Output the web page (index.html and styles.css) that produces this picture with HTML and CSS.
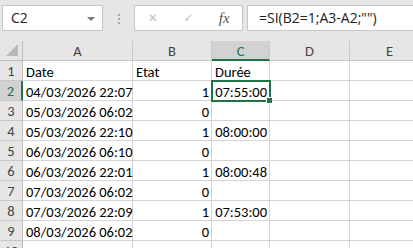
FILE: index.html
```html
<!DOCTYPE html>
<html lang="fr">
<head>
  <meta charset="UTF-8">
  <title>Classeur</title>
  <link rel="stylesheet" href="styles.css">
</head>
<body>
  <!-- barre de formule -->
  <div class="toolbar">
    <div class="namebox">C2<span class="drop"></span></div>
    <div class="grip"><i></i><i></i><i></i></div>
    <div class="fxbuttons">
      <span class="btn cancel">✕</span>
      <span class="btn ok">✓</span>
      <span class="btn fx">fx</span>
    </div>
    <div class="formula">=SI(B2=1;A3-A2;"")</div>
  </div>

  <!-- feuille -->
  <div class="sheet">
    <div class="hd corner"><span class="tri"></span></div>
    <div class="hd col">A</div>
    <div class="hd col">B</div>
    <div class="hd col sel">C</div>
    <div class="hd col">D</div>
    <div class="hd col">E</div>

    <div class="hd row">1</div>
    <div class="cell">Date</div><div class="cell">Etat</div><div class="cell">Durée</div><div class="cell"></div><div class="cell"></div>

    <div class="hd row sel">2</div>
    <div class="cell num">04/03/2026 22:07</div><div class="cell num">1</div><div class="cell num active">07:55:00<span class="handle"></span></div><div class="cell"></div><div class="cell"></div>

    <div class="hd row">3</div>
    <div class="cell num">05/03/2026 06:02</div><div class="cell num">0</div><div class="cell"></div><div class="cell"></div><div class="cell"></div>

    <div class="hd row">4</div>
    <div class="cell num">05/03/2026 22:10</div><div class="cell num">1</div><div class="cell num">08:00:00</div><div class="cell"></div><div class="cell"></div>

    <div class="hd row">5</div>
    <div class="cell num">06/03/2026 06:10</div><div class="cell num">0</div><div class="cell"></div><div class="cell"></div><div class="cell"></div>

    <div class="hd row">6</div>
    <div class="cell num">06/03/2026 22:01</div><div class="cell num">1</div><div class="cell num">08:00:48</div><div class="cell"></div><div class="cell"></div>

    <div class="hd row">7</div>
    <div class="cell num">07/03/2026 06:02</div><div class="cell num">0</div><div class="cell"></div><div class="cell"></div><div class="cell"></div>

    <div class="hd row">8</div>
    <div class="cell num">07/03/2026 22:09</div><div class="cell num">1</div><div class="cell num">07:53:00</div><div class="cell"></div><div class="cell"></div>

    <div class="hd row">9</div>
    <div class="cell num">08/03/2026 06:02</div><div class="cell num">0</div><div class="cell"></div><div class="cell"></div><div class="cell"></div>

    <div class="hd row">10</div>
    <div class="cell"></div><div class="cell"></div><div class="cell"></div><div class="cell"></div><div class="cell"></div>
  </div>
</body>
</html>
```

FILE: styles.css
```css
body {
  margin: 0;
  padding: 0;
  background: #fff;
  font-family: "Carlito", "Lato", sans-serif;
  overflow: hidden;
}
.toolbar {
  height: 41px;
  box-sizing: border-box;
  background: #e6e6e6;
  display: flex;
  align-items: flex-start;
  padding-top: 5px;
}
.namebox {
  margin-left: 2px;
  width: 101px;
  height: 26px;
  box-sizing: border-box;
  background: #fff;
  border: 1px solid #c6c6c6;
  position: relative;
  font-family: "Open Sans", sans-serif;
  font-size: 14px;
  line-height: 24px;
  padding-left: 8px;
  color: #222;
}
.drop {
  position: absolute;
  right: 7px;
  top: 11px;
  border-left: 4px solid transparent;
  border-right: 4px solid transparent;
  border-top: 4px solid #777;
}
.grip {
  width: 31px;
  display: flex;
  flex-direction: column;
  align-items: center;
  gap: 2px;
  padding-top: 9px;
}
.grip i {
  display: block;
  width: 2px;
  height: 2px;
  background: #a8a8a8;
}
.fxbuttons {
  width: 109px;
  height: 26px;
  box-sizing: border-box;
  background: #fff;
  border: 1px solid #c6c6c6;
  display: flex;
  align-items: center;
}
.btn {
  width: 36px;
  text-align: center;
  color: #c3c3c3;
  font-family: "DejaVu Sans", sans-serif;
  font-size: 12px;
}
.btn.fx {
  color: #555;
  font-family: "Liberation Serif", serif;
  font-style: italic;
  font-size: 15px;
}
.formula {
  margin-left: 4px;
  flex: 1;
  height: 26px;
  box-sizing: border-box;
  background: #fff;
  border: 1px solid #c6c6c6;
  border-right: none;
  font-family: "Open Sans", sans-serif;
  font-size: 14px;
  line-height: 24px;
  padding-left: 11px;
  color: #222;
}
.sheet {
  display: grid;
  grid-template-columns: 23px 110px 79px 58px 80px 80px;
  grid-template-rows: 20px;
  grid-auto-rows: 20px;
}
.hd {
  background: #e6e6e6;
  color: #444;
  font-size: 14.5px;
  box-sizing: border-box;
  border-right: 1px solid #c8c8c8;
  border-bottom: 1px solid #c8c8c8;
  text-align: center;
  line-height: 19px;
}
.hd.col {
  padding-top: 1px;
}
.hd.corner {
  position: relative;
  border-right: 1px solid #bcbcbc;
  border-bottom: 1px solid #bcbcbc;
}
.tri {
  position: absolute;
  right: 4px;
  bottom: 4px;
  border-left: 12px solid transparent;
  border-bottom: 12px solid #b8b8b8;
}
.hd.row {
  line-height: 21px;
  border-right-color: #bcbcbc;
}
.hd.sel {
  background: #d2d2d2;
  color: #217346;
}
.hd.col.sel {
  border-bottom: 2px solid #217346;
}
.hd.row.sel {
  border-right: 2px solid #217346;
}
.cell {
  box-sizing: border-box;
  border-right: 1px solid #d4d4d4;
  border-bottom: 1px solid #d4d4d4;
  font-size: 14.5px;
  line-height: 22px;
  padding: 0 4px 0 3px;
  white-space: nowrap;
  color: #000;
  position: relative;
}
.cell.num {
  text-align: right;
  padding-right: 2px;
}
.cell.active {
  outline: 2px solid #217346;
  outline-offset: -1px;
  z-index: 1;
}
.handle {
  position: absolute;
  right: -4px;
  bottom: -4px;
  width: 5px;
  height: 5px;
  background: #217346;
  border: 1px solid #fff;
}
```
